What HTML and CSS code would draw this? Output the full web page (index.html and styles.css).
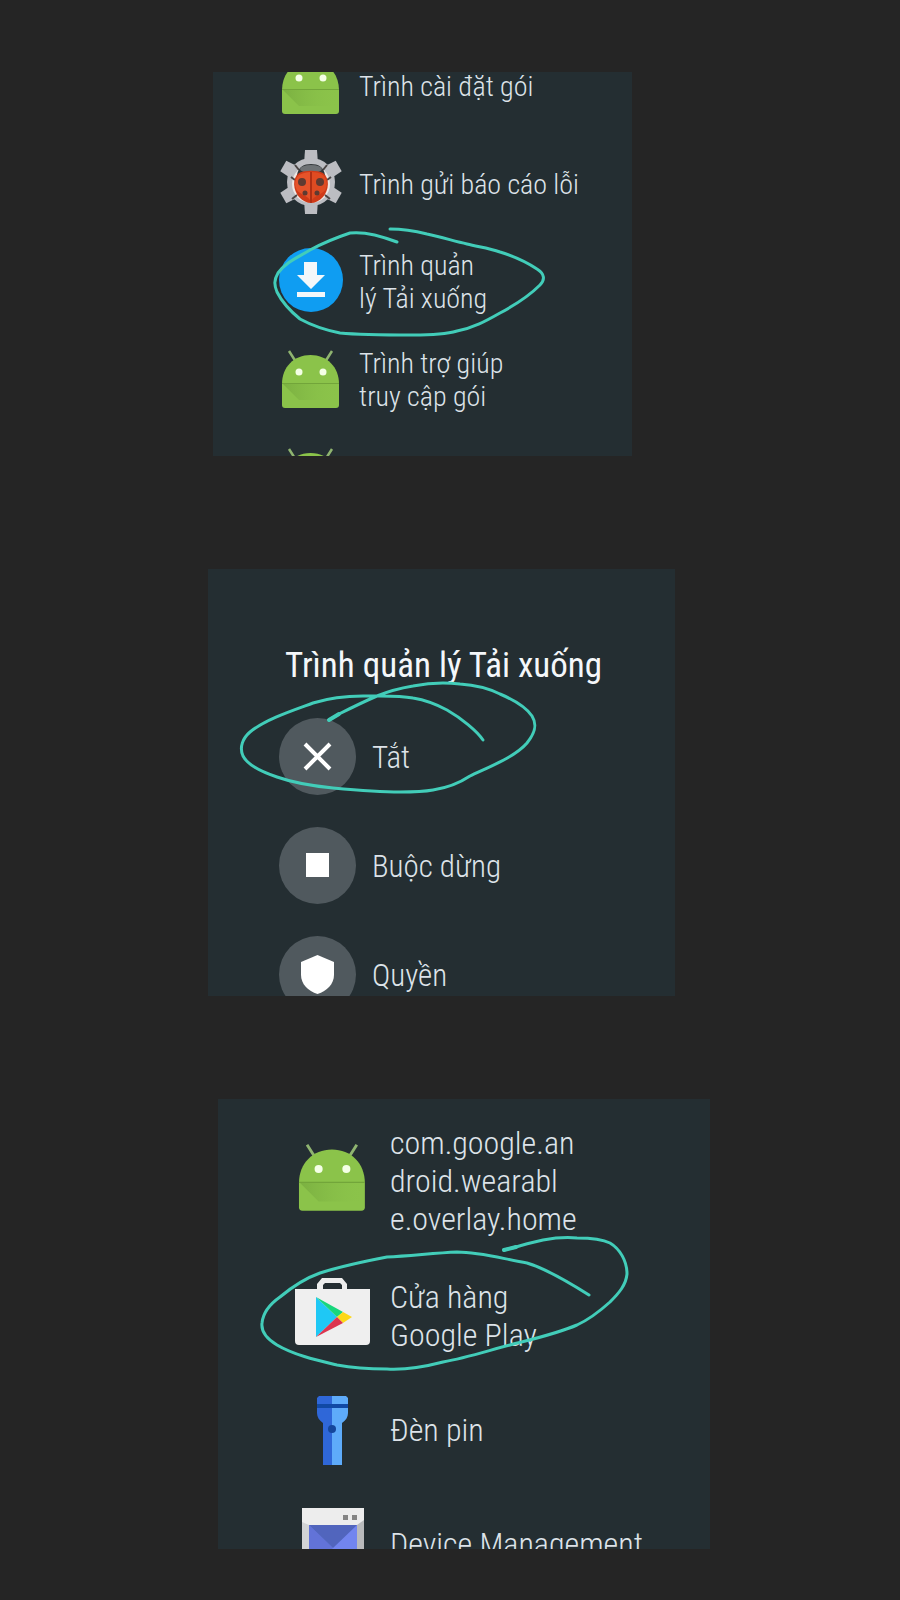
FILE: index.html
```html
<!DOCTYPE html>
<html lang="vi">
<head>
  <meta charset="UTF-8" />
  <meta name="viewport" content="width=device-width, initial-scale=1.0"/>
  <title>Trình quản lý Tải xuống</title>
  <link rel="stylesheet" href="styles.css">
</head>
<body>

  <!-- shared icon -->
  <svg class="defs" width="0" height="0" aria-hidden="true">
    <linearGradient id="fold" x1="0" y1="0" x2="1" y2="0">
      <stop offset="0" stop-color="#74a83d"/>
      <stop offset="1" stop-color="#8bc34a" stop-opacity="0"/>
    </linearGradient>
    <symbol id="android" viewBox="0 0 64 64">
      <path d="M10 5L17 16M53 5L46 16" stroke="#8fb470" stroke-width="2.500" fill="none"/>
      <path d="M3 38C3 21 15 9 31.500 9S60 21 60 38V59a3 3 0 0 1-3 3H6a3 3 0 0 1-3-3z" fill="#8bc34a"/>
      <path d="M4 38L20 54H60V38z" fill="url(#fold)" opacity=".7"/>
      <path d="M3 37.500H60" stroke="#72a53a" stroke-width="1"/>
      <circle cx="20" cy="26" r="3.500" fill="#f4ffe6"/>
      <circle cx="44" cy="26" r="3.500" fill="#f4ffe6"/>
    </symbol>
  </svg>

  <main class="steps">

    <section class="step step-apps">
      <div class="panel">
        <ul class="list">
          <li class="crop-top">
            <button class="row"><svg class="icon"><use href="#android"/></svg><span>Trình cài đặt gói</span></button>
          </li>
          <li>
            <button class="row">
              <svg class="icon" viewBox="0 0 64 64">
                <g fill="#bcbdc2">
                  <path id="tooth" d="M26 0H38L39 14H25z"/>
                  <use href="#tooth" transform="rotate(60 32 32)"/>
                  <use href="#tooth" transform="rotate(120 32 32)"/>
                  <use href="#tooth" transform="rotate(180 32 32)"/>
                  <use href="#tooth" transform="rotate(240 32 32)"/>
                  <use href="#tooth" transform="rotate(300 32 32)"/>
                  <circle cx="32" cy="32" r="24"/>
                </g>
                <circle cx="32" cy="34" r="19" fill="#eee8e6"/>
                <path d="M20 20L16 15M44 20L48 15M16 30L12 27M48 30L52 27M18 45L13 49M46 45L51 49" stroke="#4a4544" stroke-width="2"/>
                <path d="M18 25C19 17 25 14 32 14S45 17 46 25z" fill="#33373a"/>
                <ellipse cx="32" cy="19" rx="11" ry="4" fill="#6e7275"/>
                <path d="M20 23C26 20 38 20 44 23C51 28 50 40 44 47C40 51 36 53 32 53C28 53 24 51 20 47C14 40 13 28 20 23z" fill="#cf3a18"/>
                <path d="M20 25C24 23 28 22 31 22V50C27 44 18 44 17 38C15 33 17 28 20 25z" fill="#e5532a"/>
                <path d="M33 22C37 22 41 23 44 25C47 28 49 33 47 38C46 44 37 44 33 50z" fill="#df4b22"/>
                <path d="M32 22V53" stroke="#8f2410" stroke-width="1"/>
                <g fill="#5f3a31">
                  <circle cx="23" cy="32" r="4"/><circle cx="41" cy="32" r="4"/>
                  <circle cx="26" cy="43" r="2.500"/><circle cx="38" cy="43" r="2.500"/>
                </g>
              </svg>
              <span>Trình gửi báo cáo lỗi</span>
            </button>
          </li>
          <li>
            <button class="row">
              <svg class="icon" viewBox="0 0 64 64">
                <circle cx="32" cy="32" r="32" fill="#0f9df2"/>
                <path d="M25 14H38V27H46L32 41L18 27H25zM18 44H46V49H18z" fill="#f3f7fa"/>
              </svg>
              <span>Trình quản<br>lý Tải xuống</span>
            </button>
          </li>
          <li>
            <button class="row"><svg class="icon"><use href="#android"/></svg><span>Trình trợ giúp<br>truy cập gói</span></button>
          </li>
          <li class="crop-bottom">
            <div class="row"><svg class="icon"><use href="#android"/></svg></div>
          </li>
        </ul>
        <svg class="ink" width="419" height="384" viewBox="0 0 419 384" aria-hidden="true">
          <path d="M177 157C192 157 202 159 214 162C228 165 241 169 254 172C266 175 276 176 287 180C300 184 315 191 324 197C332 202 332 208 327 213C317 223 302 233 287 241C273 249 260 256 244 259C230 263 215 263 200 263C176 263 148 263 127 261C112 258 98 253 87 247C76 238 69 230 64 220C61 213 61 208 65 201C73 190 84 186 97 178C110 171 125 165 137 161C153 159 171 165 184 170"/>
        </svg>
      </div>
    </section>

    <section class="step step-details">
      <div class="panel">
        <h1 class="title">Trình quản lý Tải xuống</h1>
        <ul class="list">
          <li>
            <button class="row">
              <svg class="icon round" viewBox="0 0 77 77"><path d="M26 26L51 51M51 26L26 51" stroke="#fff" stroke-width="4"/></svg>
              <span>Tắt</span>
            </button>
          </li>
          <li>
            <button class="row">
              <svg class="icon round" viewBox="0 0 77 77"><path d="M27 26H50V50H27z" fill="#fff"/></svg>
              <span>Buộc dừng</span>
            </button>
          </li>
          <li class="crop-bottom">
            <button class="row">
              <svg class="icon round" viewBox="0 0 77 77"><path d="M38.500 19L55 26V39C55 48 48 55 38.500 58C29 55 22 48 22 39V26z" fill="#fff"/></svg>
              <span>Quyền</span>
            </button>
          </li>
        </ul>
        <svg class="ink" width="467" height="427" viewBox="0 0 467 427" aria-hidden="true">
          <path d="M121 151L131 145C145 138 155 133 169 127C181 122 193 119 205 117C220 114 236 113 252 115C267 116 280 119 292 125C306 131 318 138 324 147C329 155 328 163 319 174C307 188 281 198 262 207C250 215 238 219 225 221C214 223 203 223 192 223C169 223 147 221 125 219C105 217 86 214 69 208C54 203 40 197 35 187C31 178 35 169 42 163C58 150 86 141 105 134C121 129 138 127 155 127C173 127 190 126 205 129C217 131 228 135 239 141C253 149 269 162 275 171"/>
          <path class="blob" d="M121 151L131 145"/>
        </svg>
      </div>
    </section>

    <section class="step step-store">
      <div class="panel">
        <ul class="list">
          <li class="tall">
            <button class="row"><svg class="icon"><use href="#android"/></svg><span>com.google.an<br>droid.wearabl<br>e.overlay.home</span></button>
          </li>
          <li>
            <button class="row">
              <svg class="icon" viewBox="0 0 77 77">
                <path d="M23 12V6L28 0H48L53 6V12H48V7L46 5H31L29 7V12z" fill="#ededed"/>
                <path d="M1 11H76V63a4 4 0 0 1-4 4H5a4 4 0 0 1-4-4z" fill="#efefef"/>
                <path d="M22 19L43 39L22 59z" fill="#1fc8f5"/>
                <path d="M22 19L49 34L43 39z" fill="#18d67c"/>
                <path d="M49 34L58 39L49 45L43 39z" fill="#fdd818"/>
                <path d="M43 39L49 45L22 59z" fill="#dc3650"/>
              </svg>
              <span>Cửa hàng<br>Google Play</span>
            </button>
          </li>
          <li>
            <button class="row">
              <svg class="icon" viewBox="0 0 77 77">
                <path d="M25 4H38V73H29V31C25 28 23 25 23 21V6z" fill="#2f67d8"/>
                <path d="M38 4H52L54 6V21C54 25 52 28 48 31V73H38z" fill="#5eabfa"/>
                <path d="M23 12H54V16H23z" fill="#1149a5"/>
                <circle cx="38" cy="37" r="4" fill="#15479c"/>
              </svg>
              <span>Đèn pin</span>
            </button>
          </li>
          <li class="crop-bottom">
            <button class="row">
              <svg class="icon" viewBox="0 0 77 77">
                <path d="M8 2H70V75H8z" fill="#ededed"/>
                <path d="M8 16L15 19V75H8z" fill="#d2d3d5"/>
                <path d="M70 14L63 19V75H70z" fill="#b9babc"/>
                <path d="M15 19H63V75H15z" fill="#7285ef"/>
                <path d="M15 19V66L39 42z" fill="#6273d8"/>
                <path d="M15 19H63L39 42z" fill="#5165bd"/>
                <path d="M49 9H54V14H49zM58 9H63V14H58z" fill="#858585"/>
              </svg>
              <span>Device Management</span>
            </button>
          </li>
        </ul>
        <svg class="ink" width="492" height="450" viewBox="0 0 492 450" aria-hidden="true">
          <path d="M286 151L298 148C307 145 316 143 325 141C336 139 348 138 359 139C373 139 384 140 392 144C402 150 409 162 409 175C408 186 401 194 392 203C382 212 372 220 359 226C338 235 315 240 292 246C269 252 248 259 225 263C206 268 188 271 169 270C151 270 135 269 119 266C98 261 76 256 59 246C49 240 43 232 44 224C45 214 52 205 62 198C74 188 88 179 102 174C124 167 148 162 169 158C192 157 216 154 239 153C263 153 285 160 309 164C329 170 352 184 371 196"/>
          <path class="blob" d="M286 151L298 148"/>
        </svg>
      </div>
    </section>

  </main>

</body>
</html>
```
FILE: styles.css
```css
* {
  box-sizing: border-box;
}

body {
  margin: 0;
  background: #252525;
  font-family: 'Roboto Condensed', Roboto, 'Noto Sans', sans-serif;
  font-weight: 300;
  color: #dde3e9;
}

.defs {
  position: absolute;
}

.steps {
  padding: 72px 0 51px;
}

.step {
  display: grid;
  margin-bottom: 113px;
}

.step-apps {
  grid-template-columns: 213fr 419fr 268fr;
}

.step-details {
  grid-template-columns: 208fr 467fr 225fr;
  margin-bottom: 103px;
}

.step-store {
  grid-template-columns: 218fr 492fr 190fr;
  margin-bottom: 0;
}

.panel {
  grid-column: 2;
  position: relative;
  background: #242e32;
}

.list {
  list-style: none;
  margin: 0;
  padding: 0;
}

.row {
  display: flex;
  align-items: center;
  width: 100%;
  padding: 0;
  border: none;
  background: none;
  color: inherit;
  font: inherit;
  text-align: left;
  white-space: nowrap;
  cursor: pointer;
}

.icon {
  flex: none;
}

.crop-top,
.crop-bottom {
  display: flex;
  overflow: hidden;
}

.crop-top {
  align-items: flex-end;
}

/* app list */
.step-apps .list {
  padding-left: 66px;
  font-size: 28px;
  line-height: 33px;
}

.step-apps .row {
  height: 98px;
  gap: 16px;
}

.step-apps .row span {
  padding-top: 4px;
}

.step-apps .icon {
  width: 64px;
  height: 64px;
}

.step-apps .crop-top {
  height: 61px;
}

.step-apps .crop-bottom {
  height: 29px;
}

/* app details */
.title {
  margin: 0;
  padding: 75px 0 14px 77px;
  font-size: 35px;
  line-height: 44px;
  font-weight: 400;
  color: #f4f7fa;
  white-space: nowrap;
}

.step-details .list {
  padding-left: 71px;
  font-size: 31px;
  line-height: 38px;
}

.step-details .row {
  height: 109px;
  gap: 16px;
}

.step-details .row span {
  padding-top: 2px;
}

.step-details .icon,
.step-store .icon {
  width: 77px;
  height: 77px;
}

.round {
  border-radius: 50%;
  background: #50595e;
}

.step-details .crop-bottom {
  height: 76px;
}

/* store list */
.step-store .list {
  padding: 4px 0 0 76px;
  font-size: 32px;
  line-height: 38px;
}

.step-store .row {
  height: 114px;
  gap: 19px;
}

.step-store .tall .row {
  height: 156px;
}

.step-store .tall .icon {
  height: 74px;
  margin-bottom: 10px;
}

.step-store .crop-bottom {
  height: 62px;
}

/* pen marks over the lists */
.ink {
  position: absolute;
  top: 0;
  left: 0;
  fill: none;
  stroke: #42cdb9;
  stroke-width: 3;
  stroke-linecap: round;
  stroke-linejoin: round;
  pointer-events: none;
}

.blob {
  stroke-width: 4;
}
```
